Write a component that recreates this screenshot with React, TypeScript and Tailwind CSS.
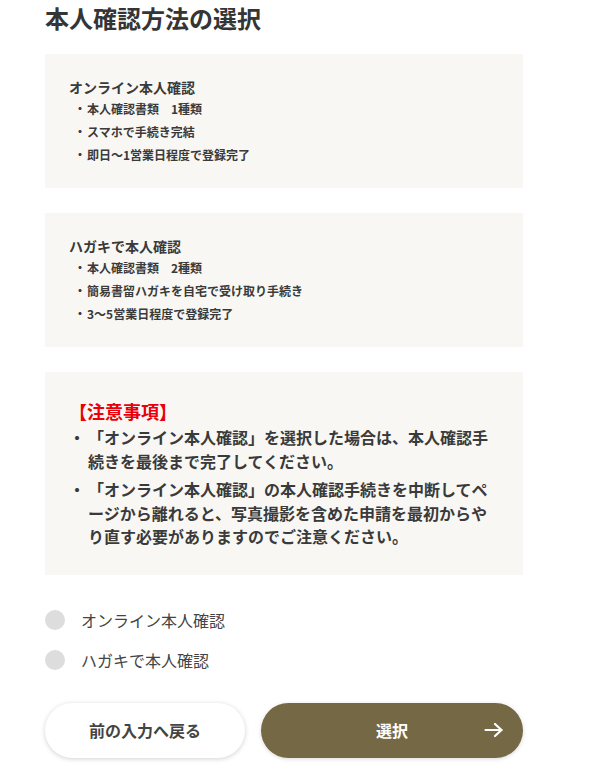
import React from "react";

const font = { fontFamily: '"Noto Sans CJK JP", "Noto Sans", sans-serif' };

function InfoBox({ title, items }: { title: string; items: string[] }) {
  return (
    <div className="bg-[#f8f7f4] pl-[24px] pr-[24px] pt-[24px] pb-[22px]">
      <p className="text-[14px] leading-[19px] font-bold text-[#3a3a3a]">{title}</p>
      <ul>
        {items.map((t) => (
          <li key={t} className="flex text-[12px] leading-[23px] font-bold text-[#3a3a3a]">
            <span className="w-[18px] shrink-0 pl-[5px]">・</span>
            <span>{t}</span>
          </li>
        ))}
      </ul>
    </div>
  );
}

function Radio({ label }: { label: string }) {
  return (
    <label className="flex items-center gap-[16px] h-[40px]">
      <span className="w-[20px] h-[20px] rounded-full bg-[#dddddd]" />
      <span className="text-[16px] text-[#444444]">{label}</span>
    </label>
  );
}

export default function App() {
  return (
    <div className="bg-white min-h-[773px] w-[597px]" style={font}>
      <div className="ml-[45px] w-[478px]">
        <h1 className="text-[24px] leading-[36px] font-bold text-[#353535]">本人確認方法の選択</h1>
        <div className="mt-[18px] flex flex-col gap-[25px]">
          <InfoBox
            title="オンライン本人確認"
            items={["本人確認書類　1種類", "スマホで手続き完結", "即日〜1営業日程度で登録完了"]}
          />
          <InfoBox
            title="ハガキで本人確認"
            items={["本人確認書類　2種類", "簡易書留ハガキを自宅で受け取り手続き", "3〜5営業日程度で登録完了"]}
          />
          <div className="bg-[#f8f7f4] pl-[24px] pr-[24px] pt-[24px] pb-[26px]">
            <p className="text-[18px] leading-[30px] font-bold text-[#e8000b]">【注意事項】</p>
            <ul className="flex flex-col gap-[5px]">
              <li className="flex text-[16px] leading-[23.5px] font-bold text-[#3a3a3a]">
                <span className="w-[19px] shrink-0">・</span>
                <span>「オンライン本人確認」を選択した場合は、本人確認手続きを最後まで完了してください。</span>
              </li>
              <li className="flex text-[16px] leading-[23.5px] font-bold text-[#3a3a3a]">
                <span className="w-[19px] shrink-0">・</span>
                <span>「オンライン本人確認」の本人確認手続きを中断してページから離れると、写真撮影を含めた申請を最初からやり直す必要がありますのでご注意ください。</span>
              </li>
            </ul>
          </div>
        </div>
        <div className="mt-[25px] flex flex-col">
          <Radio label="オンライン本人確認" />
          <Radio label="ハガキで本人確認" />
        </div>
        <div className="mt-[23px] flex gap-[16px]">
          <button className="w-[200px] h-[55px] rounded-full bg-white shadow-[0_1px_5px_rgba(0,0,0,0.18)] text-[16px] font-bold text-[#444444]">
            前の入力へ戻る
          </button>
          <button className="relative flex-1 h-[55px] rounded-full bg-[#756845] text-[16px] font-bold text-white shadow-[0_1px_4px_rgba(0,0,0,0.15)]">
            選択
            <svg
              className="absolute right-[19px] top-1/2 -translate-y-1/2"
              width="20"
              height="16"
              viewBox="0 0 20 16"
              fill="none"
              stroke="white"
              strokeWidth="2.2"
              strokeLinecap="round"
              strokeLinejoin="round"
            >
              <path d="M1.5 8h16" />
              <path d="M11 2l6.5 6-6.5 6" />
            </svg>
          </button>
        </div>
      </div>
    </div>
  );
}
